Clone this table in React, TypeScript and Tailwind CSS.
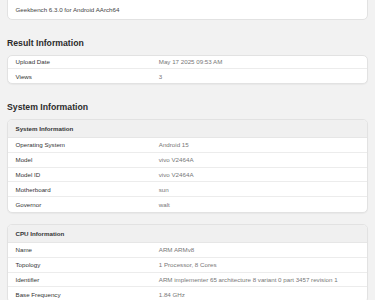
import React from "react";

type Row = [string, string];

function Card({ title, rows, compact }: { title?: string; rows: Row[]; compact?: boolean }) {
  return (
    <div className="rounded-[5px] border border-[#e2e2e2] bg-white overflow-hidden shadow-[0_1px_1px_rgba(0,0,0,0.04)]">
      {title && (
        <div className="h-[18.4px] flex items-center px-[7.5px] bg-[#f0f0f0] border-b border-[#e6e6e6] text-[6.2px] font-bold text-[#333]">
          {title}
        </div>
      )}
      {rows.map(([k, v], i) => (
        <div
          key={k}
          className={`${compact ? "h-[13.85px]" : "h-[14.75px]"} flex items-center text-[6.2px] ${i < rows.length - 1 ? "border-b border-[#ececec]" : ""}`}
        >
          <div className="w-[42%] pl-[7.5px] text-[#333]">{k}</div>
          <div className="flex-1 text-[#777]">{v}</div>
        </div>
      ))}
    </div>
  );
}

function Heading({ children }: { children: React.ReactNode }) {
  return (
    <div className="mt-[17px] mb-[5.5px] h-[12px] leading-[12px] text-[8.7px] font-bold text-[#2b2b2b]">
      {children}
    </div>
  );
}

export default function App() {
  return (
    <div
      className="w-[375px] h-[300px] overflow-hidden bg-[#f2f2f2] px-[7px]"
      style={{ fontFamily: '"Liberation Sans", Arial, sans-serif' }}
    >
      <div className="-mt-[6px] h-[26px] rounded-[5px] border border-[#e2e2e2] bg-white pt-[8px] pl-[7.5px] leading-[13px] text-[6.2px] text-[#444]">
        Geekbench 6.3.0 for Android AArch64
      </div>
      <Heading>Result Information</Heading>
      <Card
        compact
        rows={[
          ["Upload Date", "May 17 2025 09:53 AM"],
          ["Views", "3"],
        ]}
      />
      <Heading>System Information</Heading>
      <Card
        title="System Information"
        rows={[
          ["Operating System", "Android 15"],
          ["Model", "vivo V2464A"],
          ["Model ID", "vivo V2464A"],
          ["Motherboard", "sun"],
          ["Governor", "walt"],
        ]}
      />
      <div className="h-[11px]" />
      <Card
        title="CPU Information"
        rows={[
          ["Name", "ARM ARMv8"],
          ["Topology", "1 Processor, 8 Cores"],
          ["Identifier", "ARM implementer 65 architecture 8 variant 0 part 3457 revision 1"],
          ["Base Frequency", "1.84 GHz"],
        ]}
      />
    </div>
  );
}
